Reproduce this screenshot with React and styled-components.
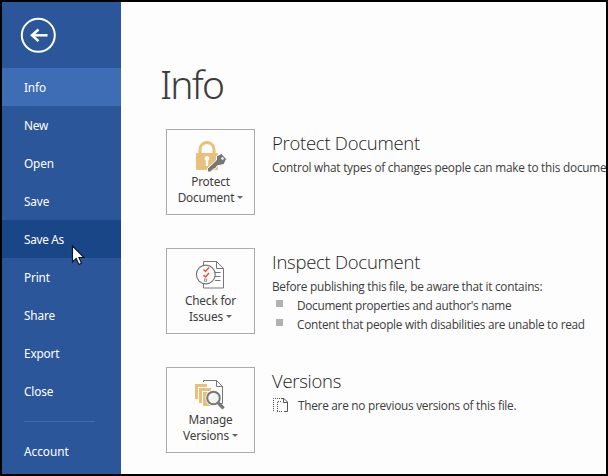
import React from "react";
import styled, { createGlobalStyle } from "styled-components";

const GlobalStyle = createGlobalStyle`
  * { box-sizing: border-box; }
  body { margin: 0; background: #000; }
`;

const Frame = styled.div`
  position: relative;
  display: flex;
  width: 608px;
  height: 476px;
  border: 2px solid #000;
  background: #fdfdfd;
  overflow: hidden;
  font-family: "Noto Sans", "Open Sans", sans-serif;
  font-size: 11.8px;
  color: #3c3c3c;
  white-space: nowrap;
`;

const Sidebar = styled.nav`
  flex: none;
  width: 119px;
  background: #2b579a;
  color: #fff;
`;

const BackButton = styled.div`
  height: 66px;
  padding: 15px 0 0 18px;
  svg { display: block; }
`;

const NavItem = styled.div`
  height: 38px;
  padding-left: 22px;
  line-height: 38px;
  letter-spacing: ${(p) => p.$track ?? -0.15}px;
  background: ${(p) => (p.$state === "active" ? "#3e6db5" : p.$state === "hover" ? "#194687" : "transparent")};
`;

const Divider = styled.div`
  width: 71px;
  height: 1px;
  margin: 11px 0 10px 22px;
  background: #3e6db5;
`;

const Content = styled.main`
  flex: 1;
  min-width: 0;
  padding: 55px 0 0 45px;
`;

const Title = styled.h1`
  height: 72px;
  margin: 0 0 0 -6px;
  font-size: 39px;
  font-weight: 300;
  line-height: 54px;
  letter-spacing: -1.8px;
`;

const Section = styled.section`
  display: flex;
  gap: 17px;
  height: 119px;
`;

const Tile = styled.div`
  flex: none;
  width: 89px;
  height: 86px;
  padding-top: 10px;
  border: 1px solid #ababab;
  text-align: center;
  line-height: 16px;
  svg { display: block; margin: 0 auto; }
`;

const TileLabel = styled.div`
  letter-spacing: -0.15px;
`;

const Caret = styled.i`
  display: inline-block;
  margin-left: 3px;
  vertical-align: 3px;
  border: solid transparent;
  border-width: 3px 3px 0;
  border-top-color: #666;
`;

const Details = styled.div`
  padding-top: 1px;
  font-family: "Open Sans", "Noto Sans", sans-serif;
`;

const Heading = styled.h2`
  margin: 0 0 1px;
  font-size: 18.5px;
  font-weight: 300;
  line-height: 26px;
  color: #1c1c1c;
  letter-spacing: -0.27px;
`;

const Line = styled.div`
  display: flex;
  align-items: center;
  height: 19px;
  letter-spacing: ${(p) => p.$track ?? -0.26}px;
`;

const Bullet = styled.i`
  width: 7px;
  height: 7px;
  margin: -3px 14px 0 4px;
  background: #b1b1b1;
`;

const EmptyIcon = styled.svg`
  margin: 0 10px 0 1px;
`;

const Pointer = styled.svg`
  position: absolute;
  left: 69px;
  top: 243px;
`;

const LockIcon = () => (
  <svg width="34" height="33" viewBox="0 0 34 33">
    <path d="M6 15V9.500a7 7 0 0 1 14 0V15" fill="none" stroke="#e8c07b" strokeWidth="3" />
    <rect x="2" y="13" width="22" height="17" rx="1" fill="#e8c07b" />
    <path d="M13 16a2.400 2.400 0 0 0-1.200 4.500V26h2.400v-5.500A2.400 2.400 0 0 0 13 16z" fill="#fff" />
    <path d="M22.500 16l5-2.500 5 5.500-2.500 5.500-5 1-2 .5-1.500 2.500-2 .5-3 3h-3v-3.500l9-8.500z" fill="#777" stroke="#fdfdfd" strokeWidth="1" />
    <circle cx="28.500" cy="18.500" r="1.200" fill="#fff" />
  </svg>
);

const CheckIcon = () => (
  <svg width="34" height="33" viewBox="0 0 34 33">
    <path d="M9.500 2.500h13l7 7v19.500h-20z" fill="#fff" stroke="#777" />
    <path d="M22.500 2.500v7h7M21 13.500h5.500M21 17.500h5.500M21 21.500h5.500" fill="none" stroke="#777" />
    <circle cx="11.800" cy="15.500" r="9.400" fill="#fdfdfd" stroke="#777" strokeWidth="1.200" />
    <path d="M9.500 10.500l2 2 3.500-4M9.500 16l2 2 3.500-4" fill="none" stroke="#e0583b" strokeWidth="1.500" />
    <rect x="10.500" y="20" width="2.200" height="2.200" fill="none" stroke="#888" strokeWidth=".8" />
  </svg>
);

const VersionsIcon = () => (
  <svg width="34" height="33" viewBox="0 0 34 33">
    <path d="M9.500 4V2.500h13l6 6v17h-3M22.500 2.500v6h6" fill="none" stroke="#777" />
    <path d="M1 6h12v3H4v12H1zM5 10h12v3H8v12H5zM9 14h12v14H9z" fill="#e8c07b" />
    <path d="M24 25l5.500 5.500" stroke="#777" strokeWidth="3" />
    <circle cx="19.500" cy="20" r="8" fill="#fdfdfd" />
    <path d="M24 24.500l5.500 5.500" stroke="#777" strokeWidth="3" />
    <circle cx="19.500" cy="20" r="6.300" fill="#f3f3f3" stroke="#777" strokeWidth="2" />
    <path d="M15.800 20.500a4 4 0 0 1 4-4" fill="none" stroke="#fff" strokeWidth="1.500" />
  </svg>
);

const App = () => (
  <>
    <GlobalStyle />
    <Frame>
      <Sidebar>
        <BackButton>
          <svg width="36" height="36" viewBox="0 0 36 36" fill="none" stroke="#fff">
            <circle cx="18.300" cy="18.300" r="16.500" strokeWidth="2" />
            <path d="M27.500 18.300H12" strokeWidth="2.500" />
            <path d="M18.500 12.500l-6.500 5.800 6.500 5.800" strokeWidth="2.500" />
          </svg>
        </BackButton>
        <NavItem $state="active">Info</NavItem>
        <NavItem>New</NavItem>
        <NavItem>Open</NavItem>
        <NavItem>Save</NavItem>
        <NavItem $state="hover" $track={-0.3}>Save As</NavItem>
        <NavItem>Print</NavItem>
        <NavItem>Share</NavItem>
        <NavItem>Export</NavItem>
        <NavItem>Close</NavItem>
        <Divider />
        <NavItem $track={0}>Account</NavItem>
      </Sidebar>
      <Content>
        <Title>Info</Title>
        <Section>
          <Tile>
            <LockIcon />
            <TileLabel>Protect<br />Document<Caret /></TileLabel>
          </Tile>
          <Details>
            <Heading>Protect Document</Heading>
            <Line $track={-0.23}>Control what types of changes people can make to this docume</Line>
          </Details>
        </Section>
        <Section>
          <Tile>
            <CheckIcon />
            <TileLabel>Check for<br />Issues<Caret /></TileLabel>
          </Tile>
          <Details>
            <Heading>Inspect Document</Heading>
            <Line>Before publishing this file, be aware that it contains:</Line>
            <Line $track={-0.28}><Bullet />Document properties and author's name</Line>
            <Line><Bullet />Content that people with disabilities are unable to read</Line>
          </Details>
        </Section>
        <Section>
          <Tile>
            <VersionsIcon />
            <TileLabel>Manage<br />Versions<Caret /></TileLabel>
          </Tile>
          <Details>
            <Heading>Versions</Heading>
            <Line>
              <EmptyIcon width="15" height="14" viewBox="0 0 15 14" fill="none" stroke="#555">
                <path d="M.5 13V.5H8" strokeDasharray="1 1" />
                <path d="M4.500 13V3.500H9M4 13.500h6" strokeDasharray="1 1" />
                <path d="M8 .5h3l3.500 3.500v9.500H11M10.500.5v4h4" />
              </EmptyIcon>
              There are no previous versions of this file.
            </Line>
          </Details>
        </Section>
      </Content>
      <Pointer width="16" height="22" viewBox="0 0 16 22">
        <path d="M1.500 1v16l3.700-3.500 2.700 6 2.600-1.200-2.600-5.800h5z" fill="#fff" stroke="#0a1430" strokeWidth="1.100" />
      </Pointer>
    </Frame>
  </>
);

export default App;
